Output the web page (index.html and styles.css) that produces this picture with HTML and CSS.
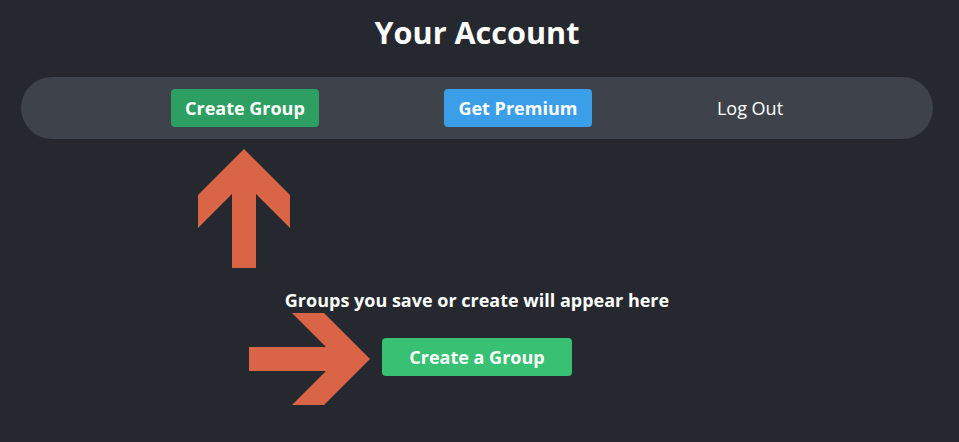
FILE: index.html
```html
<!DOCTYPE html>
<html>
<head>
<meta charset="utf-8">
<link rel="stylesheet" href="styles.css">
</head>
<body>
<div class="page">
  <h1 class="title">Your Account</h1>
  <nav class="navbar">
    <a class="btn btn-green">Create Group</a>
    <a class="btn btn-blue">Get Premium</a>
    <a class="logout">Log Out</a>
  </nav>
  <div class="hint-up">
    <svg width="92" height="120" viewBox="198 149 92 120" class="arrow">
      <polygon points="244,149 290,195 290,228 256,194 256,268 232,268 232,194 198,228 198,195" fill="#d96446"/>
    </svg>
  </div>
  <p class="empty">Groups you save or create will appear here</p>
  <div class="cta-row">
    <svg width="121" height="92" viewBox="249 313 121 92" class="arrow-right">
      <polygon points="370,359 324,313 292,313 326,347 249,347 249,371 326,371 292,405 324,405" fill="#d96446"/>
    </svg>
    <a class="btn btn-bright">Create a Group</a>
  </div>
</div>
</body>
</html>
```
FILE: styles.css
```css
html, body {
  margin: 0;
  padding: 0;
  background: #25282e;
  height: 100%;
}
.page {
  font-family: "Open Sans", "DejaVu Sans", sans-serif;
  color: #ffffff;
  display: flex;
  flex-direction: column;
  align-items: center;
  width: 954px;
  height: 442px;
}
.title {
  margin: 11px 0 0 0;
  font-size: 30.6px;
  font-weight: 700;
  line-height: 42px;
  height: 42px;
}
.navbar {
  margin-top: 24px;
  width: 912px;
  height: 62px;
  border-radius: 31px;
  background: #3e424a;
  display: flex;
  justify-content: center;
  align-items: center;
  gap: 125px;
}
.btn {
  display: inline-flex;
  align-items: center;
  justify-content: center;
  height: 38px;
  border-radius: 4px;
  font-size: 18px;
  font-weight: 700;
  color: #ffffff;
  box-sizing: border-box;
  white-space: nowrap;
}
.btn-green {
  width: 148px;
  background: #2e9f62;
}
.btn-blue {
  width: 148px;
  background: #3b9ee8;
}
.logout {
  font-size: 18px;
  font-weight: 400;
  color: #ffffff;
  white-space: nowrap;
}
.hint-up {
  margin-top: 10px;
  width: 912px;
  padding-left: 177px;
  box-sizing: border-box;
  height: 120px;
}
.arrow {
  display: block;
}
.empty {
  margin: 19px 0 0 0;
  font-size: 18px;
  font-weight: 700;
  line-height: 24px;
  height: 24px;
}
.cta-row {
  width: 954px;
  display: flex;
  align-items: center;
  margin-top: 1px;
  padding-left: 249px;
  box-sizing: border-box;
  gap: 12px;
}
.arrow-right {
  display: block;
}
.btn-bright {
  width: 190px;
  margin-bottom: 4px;
  background: #38c172;
}
```
